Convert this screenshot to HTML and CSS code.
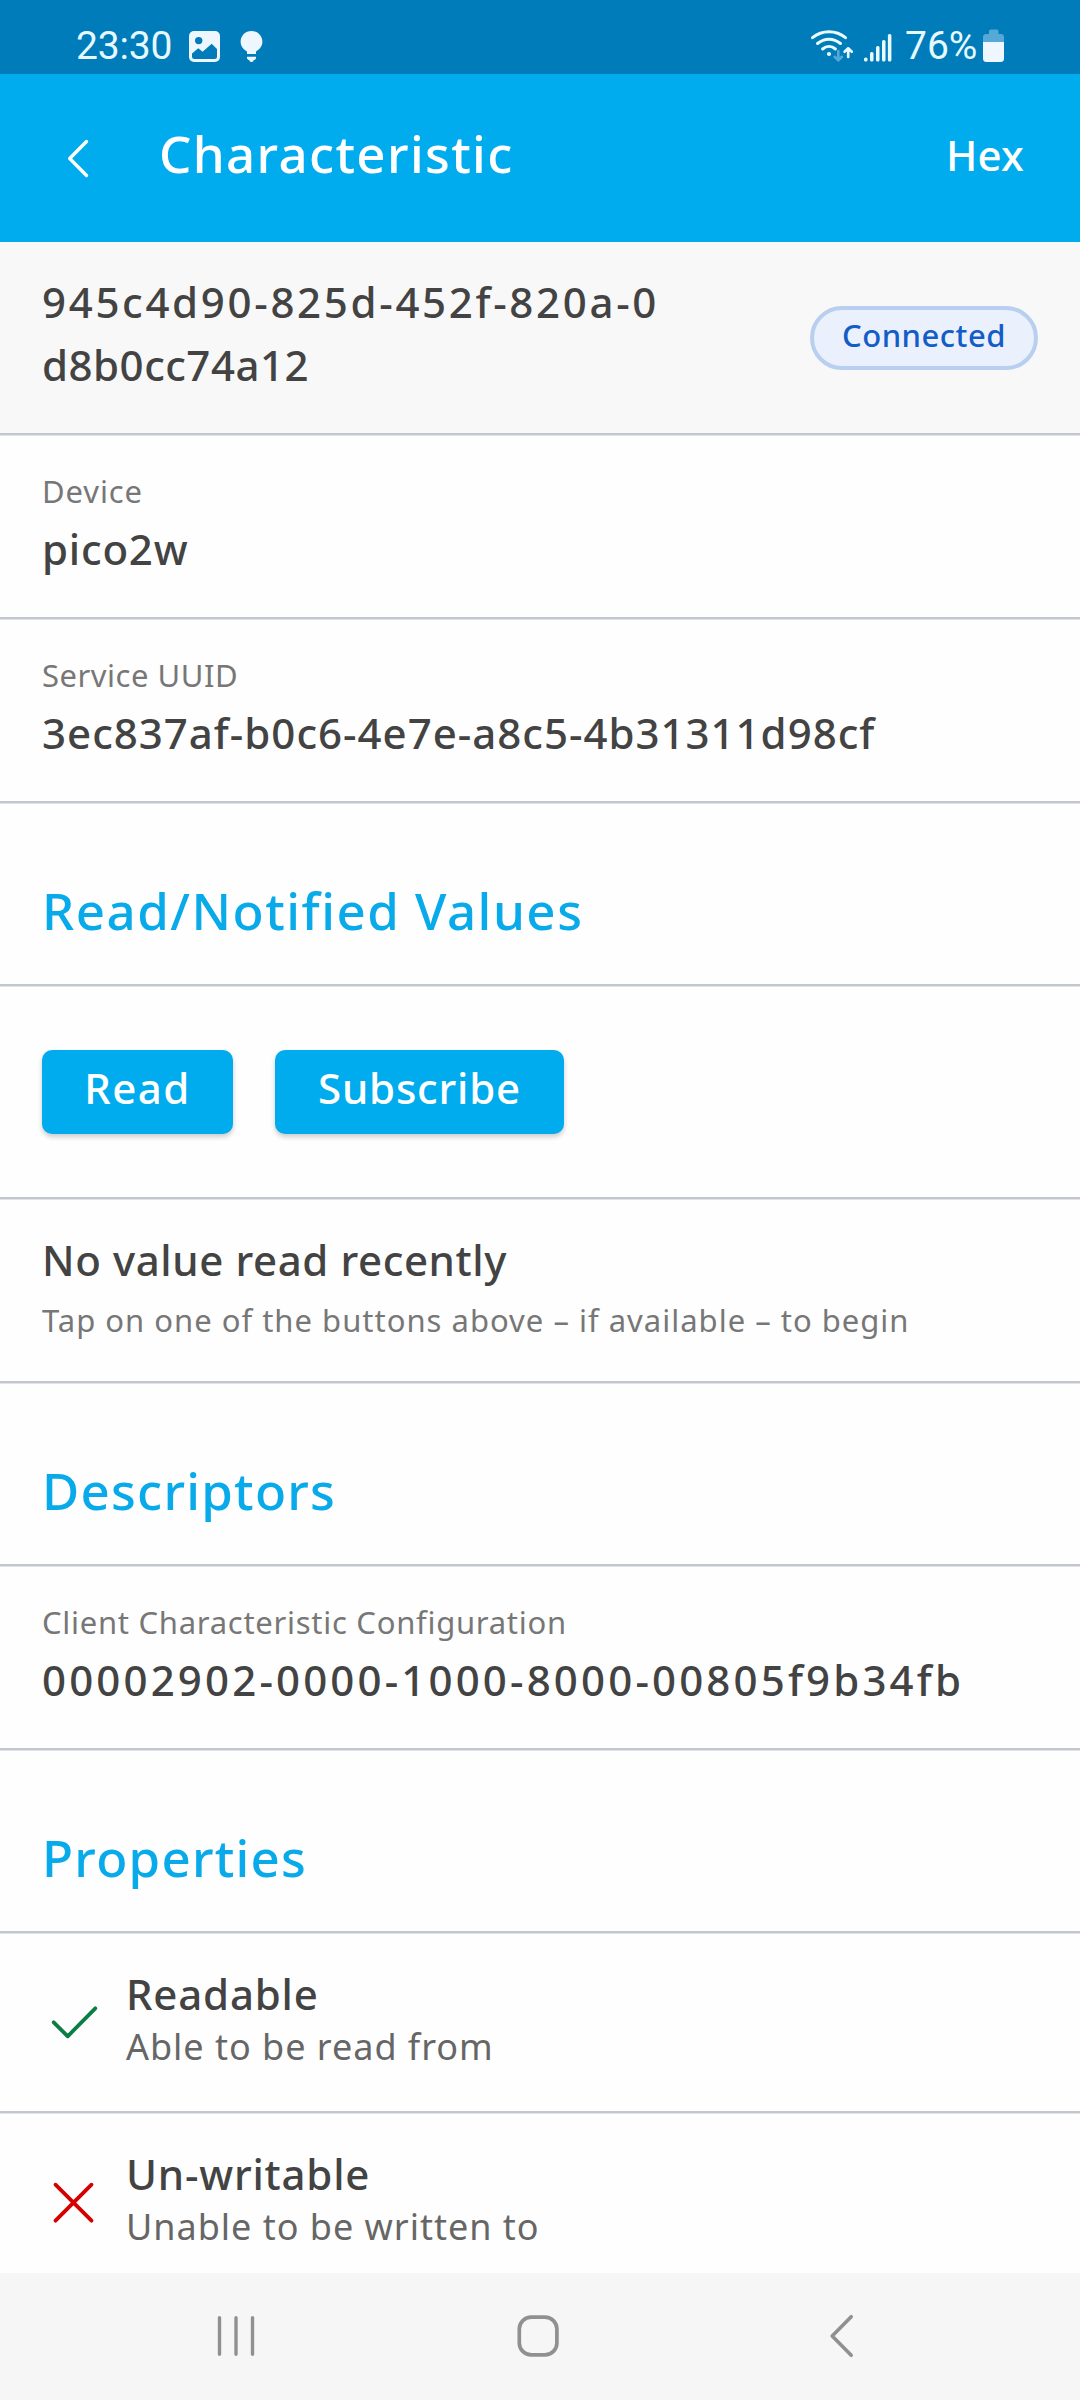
FILE: index.html
```html
<!DOCTYPE html>
<html lang="en">
<head>
<meta charset="utf-8">
<title>Characteristic</title>
<link rel="stylesheet" href="styles.css">
</head>
<body>
<div class="screen">
  <div class="status">
    <div class="status-left">
      <span class="clock">23:30</span>
      <svg class="pic" width="31" height="36" viewBox="189 28 31 36"><rect x="189" y="31" width="31" height="31" rx="5" fill="#eef7ff"/><circle cx="198.7" cy="40.6" r="3.7" fill="#007cba"/><path d="M192 53.5L198.3 48.2L202.6 51.8L211.7 43.8L217 49V56.5Q217 59 214.5 59H194.500Q192 59 192 56.500Z" fill="#007cba"/></svg>
      <svg class="bulb" width="23" height="36" viewBox="240 28 23 36" fill="#eef7ff"><path d="M251.500 31C245.300 31 240.600 35.600 240.600 41.800C240.600 46 243 49 247 51.500V54H256V51.500C260 49 262.400 46 262.400 41.800C262.400 35.600 257.700 31 251.500 31Z"/><path d="M247 56.700H256V58.500Q255 60 253.500 60.300V61Q253 62 251.500 62T249.500 61V60.300Q248 60 247 58.500Z"/></svg>
    </div>
    <div class="status-right">
      <svg width="44" height="36" viewBox="810 28 44 36" fill="none" stroke="#e9fbff" stroke-width="3" stroke-linecap="round" stroke-linejoin="round"><path d="M812.500 37.700C822 29.700 836 29.700 845.500 37.700"/><path d="M817.500 43.500C824.500 37.700 833.500 37.700 840.500 43.500"/><path d="M822.600 49C826.500 45.600 831.500 45.600 835.400 49"/><circle cx="829" cy="54" r="2.100" fill="#e9fbff" stroke="none"/><path d="M838.300 51V60M834.700 56.800L838.300 60.300L841.900 56.800" stroke="#56a8d6" stroke-width="2.600"/><path d="M848.200 57V48.500M844.600 51.800L848.200 48.300L851.800 51.800" stroke-width="2.600"/></svg>
      <svg class="signal" width="28" height="36" viewBox="864 28 28 36" fill="#e9fbff"><rect x="864" y="57.500" width="3.500" height="4" rx="1.500"/><rect x="870" y="52" width="3.500" height="9.500" rx="1.500"/><rect x="876" y="46" width="3.500" height="15.500" rx="1.500"/><rect x="882" y="40" width="3.500" height="21.500" rx="1.500"/><rect x="887.900" y="34" width="3.500" height="27.500" rx="1.500"/></svg>
      <span class="percent">76%</span>
      <svg width="21" height="36" viewBox="983 28 21 36"><path d="M989 34V31Q989 29.500 990.500 29.500H997Q998.500 29.500 998.500 31V34H1001Q1004 34 1004 37V42H983V37Q983 34 986 34Z" fill="#56a8d6"/><path d="M983 42H1004V58.500Q1004 62 1000.500 62H986.500Q983 62 983 58.500Z" fill="#eef7ff"/></svg>
    </div>
  </div>

  <header class="header">
    <svg class="back" width="32" height="40" viewBox="0 0 32 40" fill="none" stroke="#fff" stroke-width="3.400" stroke-linecap="round" stroke-linejoin="round"><path d="M23.500 3.500L6.700 20.500L23.500 37.500"/></svg>
    <h1 class="header-title">Characteristic</h1>
    <span class="header-action">Hex</span>
  </header>

  <main class="content">
    <section class="row summary">
      <div class="title"><span class="line uuid-a">945c4d90-825d-452f-820a-0</span><span class="line uuid-b">d8b0cc74a12</span></div>
      <span class="pill">Connected</span>
    </section>
    <section class="row field">
      <div class="caption device-label">Device</div>
      <div class="value device">pico2w</div>
    </section>
    <section class="row field">
      <div class="caption service-label">Service UUID</div>
      <div class="value service">3ec837af-b0c6-4e7e-a8c5-4b31311d98cf</div>
    </section>

    <h2 class="row heading">Read/Notified Values</h2>
    <section class="row actions">
      <button class="button read">Read</button>
      <button class="button subscribe">Subscribe</button>
    </section>
    <section class="row notice">
      <div class="title empty">No value read recently</div>
      <div class="caption hint">Tap on one of the buttons above – if available – to begin</div>
    </section>

    <h2 class="row heading tight">Descriptors</h2>
    <section class="row field">
      <div class="caption client-label">Client Characteristic Configuration</div>
      <div class="value client">00002902-0000-1000-8000-00805f9b34fb</div>
    </section>

    <h2 class="row heading tight">Properties</h2>
    <section class="row property">
      <svg class="mark" width="63" height="63" viewBox="0 0 63 63" fill="none" stroke="#0b7d45" stroke-width="3.800" stroke-linecap="round" stroke-linejoin="round"><path d="M11.700 31.300L25.700 45.300L53.300 17.300"/></svg>
      <div><div class="title">Readable</div><div class="detail">Able to be read from</div></div>
    </section>
    <section class="row property">
      <svg class="mark" width="63" height="63" viewBox="0 0 63 63" fill="none" stroke="#d50000" stroke-width="3.800" stroke-linecap="round"><path d="M13.500 13.700L49.500 49.700M49.500 13.700L13.500 49.700"/></svg>
      <div><div class="title">Un-writable</div><div class="detail">Unable to be written to</div></div>
    </section>
  </main>

  <nav class="nav">
    <svg width="40" height="44" viewBox="0 0 40 44" stroke="#8f9190" stroke-width="3.400" stroke-linecap="round"><path d="M3.500 3.700V40.300M20 3.700V40.300M36.500 3.700V40.300"/></svg>
    <svg class="home" width="44" height="44" viewBox="0 0 44 44" fill="none" stroke="#8f9190" stroke-width="3.700"><rect x="3.300" y="3.100" width="37.600" height="37.800" rx="12"/></svg>
    <svg class="nav-back" width="30" height="44" viewBox="0 0 30 44" fill="none" stroke="#8f9190" stroke-width="3.600" stroke-linecap="round" stroke-linejoin="round"><path d="M25.200 2.700L6.200 22L25.200 41.300"/></svg>
  </nav>
</div>
</body>
</html>
```
FILE: styles.css
```css
* { box-sizing: border-box; }
body { margin: 0; background: #fefefe; font-family: "Noto Sans", "Open Sans", sans-serif; color: #434343; }
h1, h2 { margin: 0; font-weight: 500; }
svg { display: block; flex: none; }

.screen { width: 1080px; height: 2400px; display: flex; flex-direction: column; overflow: hidden; white-space: nowrap; }

.status { flex: none; height: 74px; padding: 0 76px; display: flex; justify-content: space-between; background: #007cba; color: #e6f9ff; font: 400 39px/46px Roboto, sans-serif; }
.status-left, .status-right { display: flex; padding-top: 28px; }
.clock, .percent { margin-top: -5px; }
.clock { width: 96px; letter-spacing: -0.18px; }
.pic { margin-left: 17px; }
.bulb { margin-left: 20px; }
.signal { margin-left: 10px; }
.percent { width: 78px; margin-left: 13px; }

.header { flex: none; height: 168px; padding: 0 56px 0 63px; display: flex; align-items: flex-start; background: #00acee; color: #fff; }
.back { margin-top: 64px; }
.header-title { margin: 43px auto 0 64px; font-size: 51px; line-height: 72px; letter-spacing: 1.36px; }
.header-action { margin-top: 49px; font-size: 42px; font-weight: 500; line-height: 63px; letter-spacing: 0.16px; }

.content { flex: 1; min-height: 0; overflow: hidden; }
.row { padding: 0 42px; border-bottom: 2px solid #c2c7cf; box-shadow: 0 1px #e0e3e8; }
.title { font-size: 42px; font-weight: 500; line-height: 63px; letter-spacing: 0.8px; }
.line { display: block; }
.caption { font-size: 31px; line-height: 42px; color: #777; }
.value { font-size: 42px; font-weight: 500; line-height: 74px; }

.summary { height: 193px; padding-top: 28px; display: flex; justify-content: space-between; background: #f8f8f8; }
.uuid-a { letter-spacing: 2.68px; }
.uuid-b { letter-spacing: 0.5px; }
.pill { width: 228px; height: 64px; margin-top: 36px; border: 4px solid #b9cff0; border-radius: 32px; background: #eaf1fc; color: #145cc8; font-size: 31px; font-weight: 500; line-height: 51px; letter-spacing: 0.5px; text-align: center; }

.field { height: 184px; padding-top: 35px; }
.device-label { letter-spacing: 0.9px; }
.device { letter-spacing: 0.8px; }
.service-label { letter-spacing: 0.51px; }
.service { letter-spacing: 1px; }
.client-label { letter-spacing: 0.72px; }
.client { letter-spacing: 3.15px; }

.heading { height: 183px; padding-top: 71px; font-size: 51px; line-height: 72px; letter-spacing: 1.5px; color: #08aaea; }
.tight { letter-spacing: 1.25px; }

.actions { height: 213px; padding-top: 64px; display: flex; align-items: flex-start; gap: 42px; }
.button { height: 84px; padding: 0 0 8px; border: 0; border-radius: 10px; background: #00acee; color: #fff; font: 500 42px/76px "Noto Sans", sans-serif; box-shadow: 0 3px 5px rgba(0, 0, 0, 0.2); }
.read { width: 191px; letter-spacing: 1.5px; }
.subscribe { width: 289px; letter-spacing: 0.8px; }

.notice { height: 184px; padding-top: 29px; }
.empty { letter-spacing: 0.6px; }
.hint { margin-top: 8px; letter-spacing: 1px; }

.property { height: 180px; padding-top: 29px; display: flex; gap: 21px; }
.mark { margin-top: 29px; }
.detail { font-size: 36px; line-height: 44px; letter-spacing: 0.98px; color: #666; }

.nav { flex: none; height: 127px; padding: 41px 0 0 216px; display: flex; background: #f6f6f6; }
.home { margin-left: 260px; }
.nav-back { margin-left: 266px; }
```
